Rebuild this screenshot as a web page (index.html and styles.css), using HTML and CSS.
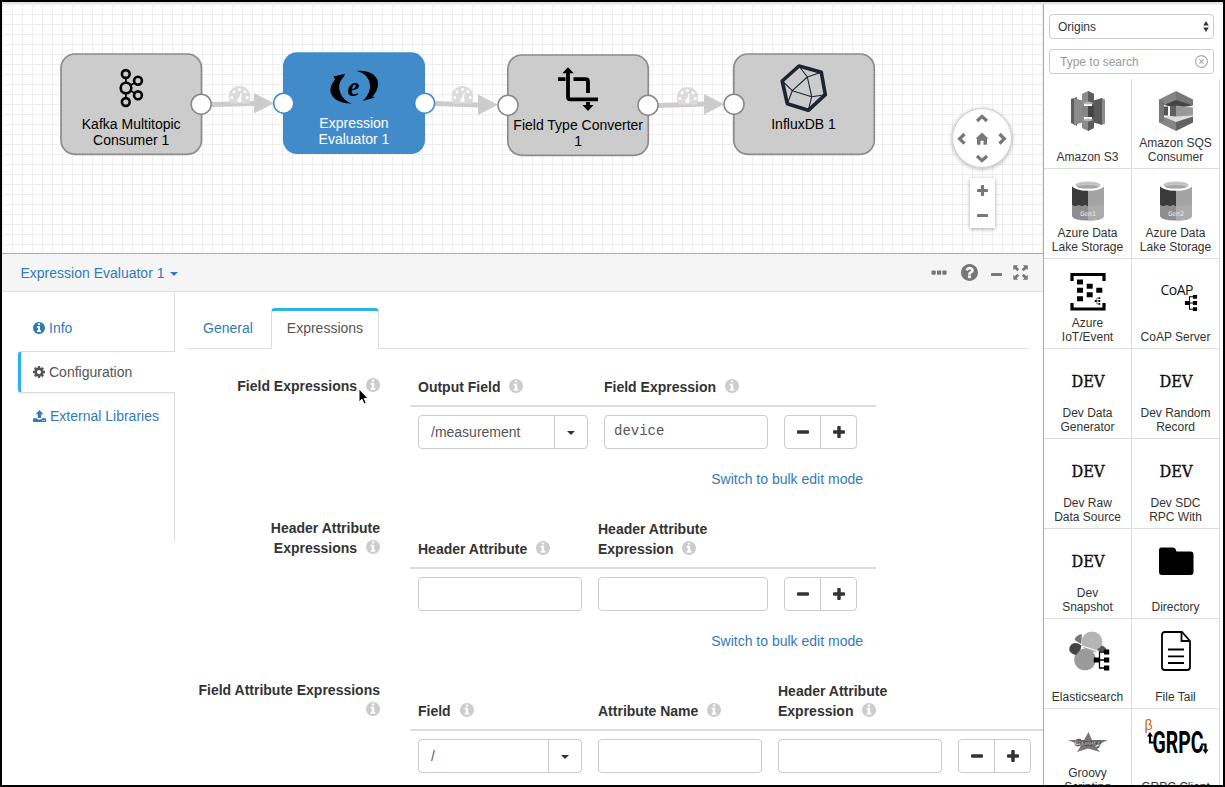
FILE: index.html
```html
<!DOCTYPE html>
<html lang="en">
<head>
<meta charset="utf-8">
<title>Pipeline editor</title>
<link rel="stylesheet" href="styles.css">
</head>
<body>
<svg class="sprite" width="0" height="0" aria-hidden="true">
  <symbol id="info" viewBox="128 128 1536 1536"><path d="M1152 1376v-160q0-14-9-23t-23-9h-96v-512q0-14-9-23t-23-9h-320q-14 0-23 9t-9 23v160q0 14 9 23t23 9h96v320h-96q-14 0-23 9t-9 23v160q0 14 9 23t23 9h448q14 0 23-9t9-23zm-128-896v-160q0-14-9-23t-23-9h-192q-14 0-23 9t-9 23v160q0 14 9 23t23 9h192q14 0 23-9t9-23zm640 416q0 209-103 385.5t-279.5 279.5-385.5 103-385.5-103-279.5-279.5-103-385.5 103-385.5 279.5-279.5 385.5-103 385.5 103 279.5 279.5 103 385.5z"/></symbol>
  <symbol id="help" viewBox="128 128 1536 1536"><path d="M1024 1376v-192q0-14-9-23t-23-9h-192q-14 0-23 9t-9 23v192q0 14 9 23t23 9h192q14 0 23-9t9-23zm256-672q0-88-55.5-163t-138.5-116-170-41q-243 0-371 213-15 24 8 42l132 100q7 6 19 6 16 0 25-12 53-68 86-92 34-24 86-24 48 0 85.5 26t37.5 59q0 38-20 61t-68 45q-63 28-115.5 86.5t-52.5 125.5v36q0 14 9 23t23 9h192q14 0 23-9t9-23q0-19 21.5-49.5t54.5-49.5q32-18 49-28.5t46-35 44.5-48 28-60.5 12.5-81zm384 192q0 209-103 385.5t-279.5 279.5-385.5 103-385.5-103-279.5-279.5-103-385.5 103-385.5 279.5-279.5 385.5-103 385.5 103 279.5 279.5 103 385.5z"/></symbol>
  <symbol id="cog" viewBox="128 128 1536 1536"><path d="M1152 896q0-106-75-181t-181-75-181 75-75 181 75 181 181 75 181-75 75-181zm512-109v222q0 12-8 23t-20 13l-185 28q-19 54-39 91 35 50 107 138 10 12 10 25t-9 23q-27 37-99 108t-94 71q-12 0-26-9l-138-108q-44 23-91 38-16 136-29 186-7 28-36 28h-222q-14 0-24.5-8.5t-11.5-21.5l-28-184q-49-16-90-37l-141 107q-10 9-25 9-14 0-25-11-126-114-165-168-7-10-7-23 0-12 8-23 15-21 51-66.5t54-70.5q-27-50-41-99l-183-27q-13-2-21-12.5t-8-23.5v-222q0-12 8-23t19-13l186-28q14-46 39-92-40-57-107-138-10-12-10-24 0-10 9-23 26-36 98.5-107.5t94.5-71.5q13 0 26 10l138 107q44-23 91-38 16-136 29-186 7-28 36-28h222q14 0 24.5 8.5t11.5 21.5l28 184q49 16 90 37l142-107q9-9 24-9 13 0 25 10 129 119 165 170 7 8 7 22 0 12-8 23-15 21-51 66.5t-54 70.5q26 50 41 98l183 28q13 2 21 12.5t8 23.5z"/></symbol>
  <symbol id="upload" viewBox="0 0 13 12"><path d="M6.5 0 10.4 4.2H8.2V8H4.8V4.200H2.600ZM.6 8.200H4q.5 1.200 1.500 1.200h2q1 0 1.500-1.200h3.400q.6 0 .6.600v2.600q0 .6-.6.6H.6q-.6 0-.6-.6V8.800q0-.6.600-.600ZM9.200 10v.9h.9V10Zm1.700 0v.9h.9V10Z" fill-rule="evenodd"/></symbol>
  <symbol id="plus" viewBox="0 0 11 11"><path d="M4.800 0h1.400q.9 0 .9.900v3h3q.9 0 .9.900v1.400q0 .9-.9.900h-3v3q0 .9-.9.900H4.800q-.9 0-.9-.9v-3h-3Q0 7.100 0 6.200V4.800q0-.9.900-.9h3v-3q0-.9.900-.9Z"/></symbol>
  <symbol id="minus" viewBox="0 0 11 11"><rect y="3.900" width="11" height="3.200" rx=".9"/></symbol>
  <symbol id="gauge" viewBox="0 0 22 18">
    <path d="M2 17.500Q0 14.500 0 11a11 11 0 0 1 22 0q0 3.500-2 6.500Z" fill="#dedada"/>
    <g fill="#fff"><circle cx="3.300" cy="11.500" r="1.500"/><circle cx="5.600" cy="5.700" r="1.500"/><circle cx="11" cy="3.400" r="1.500"/><circle cx="16.400" cy="5.700" r="1.500"/><circle cx="18.700" cy="11.500" r="1.500"/><circle cx="11" cy="14" r="2.200"/><path d="m10 13.500 2.200-6.800 1.200.4-1.400 7Z"/></g>
  </symbol>
  <symbol id="tree" viewBox="0 0 16 22"><path d="M3 11h10M13 3H6v16h7" fill="none" stroke="#000" stroke-width="1.300"/><path d="M0 8.500h5.500v5H0zM10.500.5H16v5h-5.500zM10.500 8.500H16v5h-5.500zM10.500 16.500H16v5h-5.500z"/></symbol>
  <symbol id="cylinder" viewBox="0 0 40 40">
    <path d="M4 4h16v35.500Q5 39.500 4 35Z" fill="#8e8e8e"/><path d="M20 4h16v31q-1 4.500-16 4.500Z" fill="#a3a3a3"/>
    <path d="M4 5h16v20q-2 0-3-1.500-2.500 3-6.500.2-2.500 2.800-6.500 0Z" fill="#3b3b3b"/>
    <path d="M20 24q2.500 2.500 5 0 3 2.500 5.500 0 2.500 1.800 5.500 0v11q-1 4.500-16 4.500Z" fill="#acacac"/>
    <ellipse cx="20" cy="4.500" rx="16" ry="5.200" fill="#fff"/><ellipse cx="20" cy="4" rx="12.500" ry="3.600" fill="#c4c4c4"/><path d="M8.500 5.400q11.500-3 23 0-3 2.200-11.500 2.200T8.500 5.400Z" fill="#a5a5a5"/>
  </symbol>
</svg>

<div class="app">
  <main class="main">
    <section class="canvas">
      <svg class="pipeline" width="1041" height="251" viewBox="2 2 1041 251">
        <g stroke="#ccc" stroke-width="5"><path d="m211 104.500 44-1"/><path d="m434 103.500 45 1.500"/><path d="m658 105.500 46-1.500"/></g>
        <g fill="#ccc"><path d="M254 93v20.500l20-10.300Z"/><path d="M478 94.500V115l20-10.300Z"/><path d="M704 94v20.500l20-10.300Z"/></g>
        <use href="#gauge" x="228.500" y="86" width="22" height="18"/><use href="#gauge" x="451.500" y="86" width="22" height="18"/><use href="#gauge" x="676.500" y="87" width="22" height="18"/>
        <g fill="#ccc" stroke="#8f8a8b" stroke-width="1.700">
          <rect x="61" y="54" width="140.500" height="100.300" rx="14"/><rect x="507.800" y="55" width="140.500" height="100.300" rx="14"/><rect x="733.800" y="54" width="140.500" height="100.300" rx="14"/>
        </g>
        <rect x="283" y="52.300" width="142" height="101.700" rx="14" fill="#428bca"/>
        <g fill="#fff" stroke="#8a8586" stroke-width="1.500"><circle cx="201.200" cy="104.200" r="10"/><circle cx="508" cy="105.200" r="10"/><circle cx="648" cy="105.200" r="10"/><circle cx="734" cy="104.200" r="10"/></g>
        <g fill="#fff" stroke="#428bca" stroke-width="1.500"><circle cx="283.700" cy="103.200" r="10"/><circle cx="424.600" cy="103.200" r="10"/></g>

        <g fill="none" stroke="#000" stroke-width="2.600"><circle cx="125.800" cy="74" r="3.900"/><circle cx="126" cy="88" r="5.300"/><circle cx="125.800" cy="102" r="3.900"/><circle cx="138" cy="80.700" r="3.900"/><circle cx="138" cy="95.300" r="3.900"/><path d="M125.900 78v5m0 10v5M131 85l3.500-2M131 91l3.500 2" stroke-width="1.800"/></g>

        <path d="M333.500 76.500 345 73.800l-1.300 3.200c-3.500 3.500-5 7-4.300 12 1 7 5.500 12 12.300 14.500-10 .5-18.500-4-20.700-10-1.600-5 .5-9.500 4-14ZM356.500 71c9.500-1.500 18.500 2 21 9 1.500 5.500-.2 11.500-5 16.500l2.300 1L362.500 101c6-5.500 8.800-12 7-18.500-1.500-6-6-10-13-11.500Z"/>
        <text x="353.500" y="96.300" class="glyph-e">e</text>

        <g fill="none" stroke="#000" stroke-width="3.800"><path d="M568 71V97q0 2.300 2.300 2.300H598"/><path d="M558 79.200h7.500M573.500 79.200H585.500q2.500 0 2.500 2.500V93M588 102v4"/></g><path d="m568 67.300 5.700 6h-11.400ZM588 111l-5.700-6h11.400Z"/>

        <g fill="none" stroke="#1c2430" stroke-linejoin="round"><path d="m799 66 22.300 6.300 4 22.400-17 15.600-21-6.600L782.200 81Z" stroke-width="3.600"/><path d="m807.300 77-15 13.700 19.400 6ZM799 66l8.300 11 14-4.700M782.200 81l10.100 9.700-5 13M825.300 94.700l-13.600 2-3.400 13.600" stroke-width="1.100"/></g>

        <g class="node-label">
          <text x="131.200" y="129.300">Kafka Multitopic</text><text x="131.200" y="144.600">Consumer 1</text>
          <text x="354" y="128.300" class="on-blue">Expression</text><text x="354" y="143.600" class="on-blue">Evaluator 1</text>
          <text x="578.200" y="130.300">Field Type Converter</text><text x="578.200" y="145.600">1</text>
          <text x="803.500" y="129.300">InfluxDB 1</text>
        </g>
      </svg>
      <div class="controls">
        <svg class="pan" width="60" height="60" viewBox="0 0 60 60" fill="none" stroke="#777" stroke-width="3.300"><path d="m25 13 5-4.600 5 4.600M25 48l5 4.600 5-4.600M12.500 26l-4.800 4.800 4.800 4.800M47.500 26l4.800 4.800-4.800 4.800"/><path d="m30 24.500 6.500 6.300H35v6h-3.500v-4h-3v4H25v-6h-1.500Z" fill="#777" stroke="none"/></svg>
        <div class="zoom"><svg><use href="#plus"/></svg><svg><use href="#minus"/></svg></div>
      </div>
    </section>

    <header class="panel-head">
      <a class="stage-name">Expression Evaluator 1 <i class="caret"></i></a>
      <div class="tools">
        <svg class="dots" width="16" height="16" viewBox="0 0 16 16"><rect x=".5" y="5.400" width="4.300" height="4.300" rx="1"/><rect x="5.900" y="5.400" width="4.300" height="4.300" rx="1"/><rect x="11.300" y="5.400" width="4.300" height="4.300" rx="1"/></svg>
        <svg width="17" height="17"><use href="#help"/></svg>
        <svg class="min" width="11" height="11"><use href="#minus"/></svg>
        <svg width="15" height="15" viewBox="0 0 15 15"><path d="M.3.300h4.900L3.700 1.800l2.500 2.500-1.900 1.900-2.500-2.500L.3 5.200ZM14.700.3v4.900l-1.500-1.500-2.500 2.500-1.900-1.900 2.500-2.500L9.800.3ZM.3 14.700V9.800l1.500 1.500 2.500-2.500 1.900 1.900-2.500 2.500 1.500 1.500ZM14.700 14.700H9.800l1.500-1.500-2.500-2.500 1.900-1.900 2.500 2.500 1.500-1.500Z"/></svg>
      </div>
    </header>

    <section class="panel">
      <nav class="side-nav">
        <a><svg width="12" height="12"><use href="#info"/></svg>Info</a>
        <a class="active"><svg width="12" height="12"><use href="#cog"/></svg>Configuration</a>
        <a><svg width="13" height="12"><use href="#upload"/></svg>External Libraries</a>
      </nav>
      <div class="content">
        <div class="tabs"><a>General</a><a class="active">Expressions</a></div>

        <div class="field">
          <label>Field Expressions <svg class="tip"><use href="#info"/></svg></label>
          <div class="table cols-1">
            <div class="row head"><b>Output Field <svg class="tip"><use href="#info"/></svg></b><b>Field Expression <svg class="tip"><use href="#info"/></svg></b></div>
            <div class="row"><div class="combo"><span>/measurement</span><em><i class="caret"></i></em></div><div class="input code">device</div><div class="btns"><em><svg><use href="#minus"/></svg></em><em><svg><use href="#plus"/></svg></em></div></div>
            <a class="bulk">Switch to bulk edit mode</a>
          </div>
        </div>

        <div class="field">
          <label>Header Attribute<br>Expressions <svg class="tip"><use href="#info"/></svg></label>
          <div class="table cols-2">
            <div class="row head"><b>Header Attribute <svg class="tip"><use href="#info"/></svg></b><b>Header Attribute<br>Expression <svg class="tip"><use href="#info"/></svg></b></div>
            <div class="row"><div class="input"></div><div class="input"></div><div class="btns"><em><svg><use href="#minus"/></svg></em><em><svg><use href="#plus"/></svg></em></div></div>
            <a class="bulk">Switch to bulk edit mode</a>
          </div>
        </div>

        <div class="field">
          <label>Field Attribute Expressions<br><svg class="tip"><use href="#info"/></svg></label>
          <div class="table cols-3">
            <div class="row head"><b>Field <svg class="tip"><use href="#info"/></svg></b><b>Attribute Name <svg class="tip"><use href="#info"/></svg></b><b>Header Attribute<br>Expression <svg class="tip"><use href="#info"/></svg></b></div>
            <div class="row"><div class="combo"><span>/</span><em><i class="caret"></i></em></div><div class="input"></div><div class="input"></div><div class="btns"><em><svg><use href="#minus"/></svg></em><em><svg><use href="#plus"/></svg></em></div></div>
          </div>
        </div>
      </div>
    </section>
  </main>

  <aside class="library">
    <div class="select">Origins<svg width="6" height="11" viewBox="0 0 6 11"><path d="M3 0l2.800 4.500H.2ZM3 11 .2 6.500h5.600Z" fill="#333"/></svg></div>
    <div class="search">Type to search<svg width="13" height="13" viewBox="0 0 13 13" fill="none" stroke="#aaa"><circle cx="6.500" cy="6.500" r="5.900" stroke-width="1.200"/><path d="m4.400 4.400 4.200 4.200m0-4.200L4.400 8.600" stroke-width="1.300"/></svg></div>
    <div class="stages">
      <div class="stage"><svg class="pic" viewBox="0 0 40 40"><path d="M3 8l6-2v29l-6-3Z" fill="#5e5e5e"/><path d="m6 7 10 3v21L6 34Z" fill="#8b8b8b"/><path d="m34 7-10 3v21l10 3Z" fill="#5a5a5a"/><path d="m34 7 3 1.500v24L34 34Z" fill="#8c8c8c"/><path d="M14 3l6-3 6 3v9l-6 1-6-1Z" fill="#8c8c8c"/><path d="m20 0 6 3v9l-6 1Z" fill="#5c5c5c"/><path d="M14 15h6v11h-6Z" fill="#858585"/><path d="M20 15h6v11h-6Z" fill="#444"/><path d="m14 29 6-1 6 1v8l-6 3-6-3Z" fill="#8c8c8c"/><path d="m20 28 6 1v8l-6 3Z" fill="#5c5c5c"/><path d="m14 12 6-1.500 6 1.500-6 1.500ZM14 29l6-1.500 6 1.500-6 1.500Z" fill="#b5b5b5"/></svg><span>Amazon S3</span></div>
      <div class="stage"><svg class="pic" viewBox="0 0 40 40"><path d="m3 8.500 17-8.500v11L8 14v12l12 3v11L3 31.500Z" fill="#858585"/><path d="M20 0l17 8.500v6L20 11Z" fill="#777"/><path d="m8 14 12-5 17 5.500L21 17Z" fill="#444"/><path d="m20 40 17-8.500v-6L20 29Z" fill="#626262"/><path d="m8 26 12-3 17 2.500L20 31Z" fill="#ddd"/><path d="M3 8.500 8 10v20l-5 1.500Z" fill="#777"/><path d="M8 15.500h4v9H8Z" fill="#555"/><path d="m14 15 6-.5v11l-6-.5Z" fill="#606060"/><path d="m20 14.500 17 2v8l-17 1Z" fill="#999"/></svg><span>Amazon SQS<br>Consumer</span></div>
      <div class="stage"><svg class="pic" viewBox="0 0 40 40"><use href="#cylinder"/><text x="20" y="35" class="gen">Gen1</text></svg><span>Azure Data<br>Lake Storage</span></div>
      <div class="stage"><svg class="pic" viewBox="0 0 40 40"><use href="#cylinder"/><text x="20" y="35" class="gen">Gen2</text></svg><span>Azure Data<br>Lake Storage</span></div>
      <div class="stage"><svg class="pic" viewBox="0 0 40 40"><path d="M4 10V3.500h32V10M4 32v6h32v-6" fill="none" stroke="#000" stroke-width="3.200"/><path d="M9 8.500h6v5H9zM9 16.800h6v5H9zM9 25.300h6v5H9zM18.700 12.700h6v5h-6zM18.700 21.200h6v5h-6zM28.300 16.800h6v5h-6z"/><use href="#tree" x="26.500" y="26" width="6" height="8"/></svg><span>Azure<br>IoT/Event</span></div>
      <div class="stage"><svg class="pic" viewBox="0 0 40 40"><text x="4.500" y="23.500" class="coap" textLength="33">CoAP</text><use href="#tree" x="28.500" y="23.500" width="13" height="17"/></svg><span>CoAP Server</span></div>
      <div class="stage"><svg class="pic" viewBox="0 0 40 40"><text x="20" y="26" class="dev" textLength="33" lengthAdjust="spacingAndGlyphs">DEV</text></svg><span>Dev Data<br>Generator</span></div>
      <div class="stage"><svg class="pic" viewBox="0 0 40 40"><text x="20" y="26" class="dev" textLength="33" lengthAdjust="spacingAndGlyphs">DEV</text></svg><span>Dev Random<br>Record</span></div>
      <div class="stage"><svg class="pic" viewBox="0 0 40 40"><text x="20" y="26" class="dev" textLength="33" lengthAdjust="spacingAndGlyphs">DEV</text></svg><span>Dev Raw<br>Data Source</span></div>
      <div class="stage"><svg class="pic" viewBox="0 0 40 40"><text x="20" y="26" class="dev" textLength="33" lengthAdjust="spacingAndGlyphs">DEV</text></svg><span>Dev SDC<br>RPC With</span></div>
      <div class="stage"><svg class="pic" viewBox="0 0 40 40"><text x="20" y="26" class="dev" textLength="33" lengthAdjust="spacingAndGlyphs">DEV</text></svg><span>Dev<br>Snapshot</span></div>
      <div class="stage"><svg class="pic" viewBox="0 0 40 40"><path d="M5.500 6.500H17q2 0 2.500 1.500l1 2.500h14q3 0 3 3v17.500q0 3-3 3H6q-3 0-3-3V9q0-2.500 2.500-2.500Z"/></svg><span>Directory</span></div>
      <div class="stage"><svg class="pic" viewBox="0 0 40 40"><circle cx="24" cy="11" r="10.500" fill="#b5b5b5"/><circle cx="17" cy="28.500" r="10.800" fill="#9a9a9a"/><path d="M6.500 9q2-6 7.500-5.500L13 13Z" fill="#777"/><path d="M4 13q4-2.500 9.500 1.500l-1 4-4.500 5.500q-4-.5-6.500-4Q.5 15.500 4 13Z" fill="#444"/><path d="m29 19 5-4.500q4 1.500 5.500 6H30Z" fill="#555"/><path d="m14 15 19 6" stroke="#fff"/><use href="#tree" x="25.500" y="18" width="16" height="22"/></svg><span>Elasticsearch</span></div>
      <div class="stage"><svg class="pic" viewBox="0 0 40 40" fill="none" stroke="#000" stroke-width="1.800"><path d="M9 1h17l8 9v26q0 3-3 3H9q-3 0-3-3V4q0-3 3-3ZM25.500 1.500v8.500H34M12 18.500h16M12 25.300h16M12 32h16"/></svg><span>File Tail</span></div>
      <div class="stage"><svg class="pic" viewBox="0 0 40 40"><path d="M20.500 11 24 19h16l-13 6 5 6-12-3.500L9 31l4-6.500L0 19h16Z" fill="#777"/><text x="20" y="25" class="groovy" textLength="27" lengthAdjust="spacingAndGlyphs">Groovy</text></svg><span>Groovy<br>Scripting</span></div>
      <div class="stage"><svg class="pic" viewBox="0 0 40 40"><text x="-11.500" y="8.500" class="beta">β</text><text x="-3.500" y="32" class="grpc" textLength="51" lengthAdjust="spacingAndGlyphs">GRPC</text><path d="M-6 14v7.500h4M45 23.500h4.500V30" fill="none" stroke="#000" stroke-width="2.200"/><path d="m-6 11-3 4.500h6ZM49.500 33l-3-4.500h6Z"/></svg><span>GRPC Client</span></div>
    </div>
  </aside>
  <svg class="cursor" width="12" height="18" viewBox="0 0 12 18"><path d="M1 1v13l3-2.800L6 16l2.300-1L6.200 10.500h4Z" stroke="#fff" stroke-width="1"/></svg>
</div>
</body>
</html>
```
FILE: styles.css
```css
* { box-sizing: border-box; }
body { margin: 0; font: 14px/20px "Liberation Sans", Arial, sans-serif; color: #333; }
svg { display: block; }
i, em { font-style: normal; }
.sprite { position: absolute; }

.app { position: relative; display: flex; width: 1225px; height: 787px; overflow: hidden; border: 2px solid #000; background: #fff; }
.app::before { content: ""; position: absolute; inset: 0 0 auto; height: 4px; background: linear-gradient(#d9d9d9, rgba(238, 238, 238, 0)); }
.main { display: flex; flex-direction: column; width: 1041px; overflow: hidden; }

/* canvas */
.canvas {
  position: relative; height: 251px; flex: none;
  background: linear-gradient(90deg, #eee 1px, transparent 1px) 0 0 / 10px 10px, linear-gradient(#eee 1px, transparent 1px) 0 0 / 10px 10px;
  background-position: 10px 2px;
}
.node-label { font-size: 14px; text-anchor: middle; fill: #000; }
.on-blue { fill: #fff; }
.glyph-e { font: italic bold 27px "Liberation Serif", serif; text-anchor: middle; }
.controls { position: absolute; top: 106px; left: 950px; width: 60px; display: flex; flex-direction: column; align-items: center; gap: 10px; }
.pan { border-radius: 50%; background: #fff; box-shadow: inset 0 0 0 1px #ccc, 0 1px 4px rgba(0, 0, 0, .3); }
.zoom { display: flex; flex-direction: column; gap: 14px; width: 25px; height: 50px; padding: 7px; align-items: center; background: #fff; box-shadow: 0 1px 4px rgba(0, 0, 0, .35); fill: #777; }
.zoom svg { width: 11px; height: 11px; flex: none; }

/* panel header */
.panel-head { display: flex; align-items: center; justify-content: space-between; flex: none; height: 39px; padding: 0 15px 0 18.500px; border-top: 1px solid #aaa; border-bottom: 1px solid #ddd; background: #f5f5f5; }
a { color: #337ab7; }
.caret { display: inline-block; margin-left: 2px; vertical-align: middle; border: 4px solid transparent; border-top-color: currentColor; border-bottom: 0; }
.tools { display: flex; align-items: center; fill: #777; }
.tools svg + svg { margin-left: 14px; }
.tools .min { margin: 3px 0 0 13px; }
.tools .min + svg { margin-left: 11px; }

/* panel body */
.panel { display: flex; flex: 1; min-height: 0; align-items: flex-start; }
.side-nav { width: 173px; height: 250px; flex: none; padding: 16px 0 0 16px; border-right: 1px solid #ddd; }
.side-nav a { display: flex; align-items: center; gap: 4px; height: 40px; margin-bottom: 4px; padding-left: 15px; fill: currentColor; }
.side-nav .active { height: 42px; margin: -1px -1px 3px 0; padding-left: 12px; border: 1px solid #ddd; border-left: 3px solid #29b5e8; border-right: 0; border-radius: 4px 0 0 4px; background: #fff; color: #555; box-shadow: -1px 1px 2px rgba(0, 0, 0, .08); }
.content { flex: 1; padding: 16px 0 0 12px; min-width: 0; }
.tabs { display: flex; width: 841px; height: 41px; margin-bottom: 20px; border-bottom: 1px solid #ddd; }
.tabs a { height: 41px; padding: 10px 16px; }
.tabs a.active { padding: 7px 15px 10px; margin-left: 2px; border: 1px solid #ddd; border-top: 3px solid #29b5e8; border-bottom: 0; border-radius: 4px 4px 0 0; background: #fff; color: #555; }

.field { display: flex; height: 142px; }
.field + .field { height: 162px; }
.field label { width: 193px; flex: none; margin-right: 30px; padding-top: 7px; text-align: right; font-weight: bold; }
.tip { display: inline-block; width: 14px; height: 14px; margin-left: 5px; vertical-align: -1px; fill: #ccc; }
.table { width: 466px; flex: none; }
.row { display: grid; gap: 16px; padding: 8px; }
.row.head { align-items: end; border-bottom: 2px solid #ddd; }
.cols-1 .row { grid-template-columns: 170px 164px 73px; }
.cols-2 .row { grid-template-columns: 164px 170px 73px; }
.cols-3 .row { grid-template-columns: 164px 164px 164px 73px; }
.cols-3 { width: 640px; }
.input, .combo, .btns { display: flex; height: 34px; border: 1px solid #ccc; border-radius: 4px; background: #fff; color: #555; }
.code { padding: 5px 9px; font-family: "Liberation Mono", monospace; }
.combo span { flex: 1; padding: 6px 12px; }
.combo em { display: flex; width: 33px; align-items: center; justify-content: center; border-left: 1px solid #ccc; color: #333; }
.combo .caret { margin: 2px 0 0; }
.btns em { display: flex; flex: 1; align-items: center; justify-content: center; fill: #333; }
.btns em + em { border-left: 1px solid #ccc; }
.btns svg { width: 12px; height: 12px; }
.bulk { display: block; margin: 12px 13px 0 0; text-align: right; }

/* stage library */
.library { width: 180px; flex: none; border-left: 1px solid #aaa; font-size: 12px; line-height: 14px; }
.select, .search { display: flex; align-items: center; justify-content: space-between; width: 165px; height: 25px; margin: 12px 0 0 5px; padding: 0 4px 0 8px; border: 1px solid #ccc; border-radius: 4px; }
.search { margin-top: 10px; padding: 0 5px 0 10px; color: #999; border-radius: 3px; }
.stages { display: grid; grid-template-columns: 88px 88px; grid-auto-rows: 90px; margin-top: 5px; }
.stage { display: flex; flex-direction: column; align-items: center; justify-content: space-between; padding: 12px 0 4px; border-right: 1px solid #ddd; border-bottom: 1px solid #ddd; text-align: center; }
.pic { width: 40px; height: 40px; flex: none; overflow: visible; }
.gen { font: 6.500px "DejaVu Sans Mono", monospace; fill: #eee; text-anchor: middle; }
.coap { font: 14px "Open Sans", sans-serif; fill: #111; }
.dev { font: 16.500px "DejaVu Serif", serif; text-anchor: middle; fill: #111; stroke: #111; stroke-width: .4; }
.groovy { font: italic bold 11px "Liberation Serif", serif; text-anchor: middle; fill: #fff; stroke: #333; stroke-width: .6; }
.beta { font: 14px "Liberation Sans", sans-serif; fill: #c4660a; }
.grpc { font: bold 32px Roboto, sans-serif; }

.cursor { position: absolute; left: 356px; top: 386px; }
```
